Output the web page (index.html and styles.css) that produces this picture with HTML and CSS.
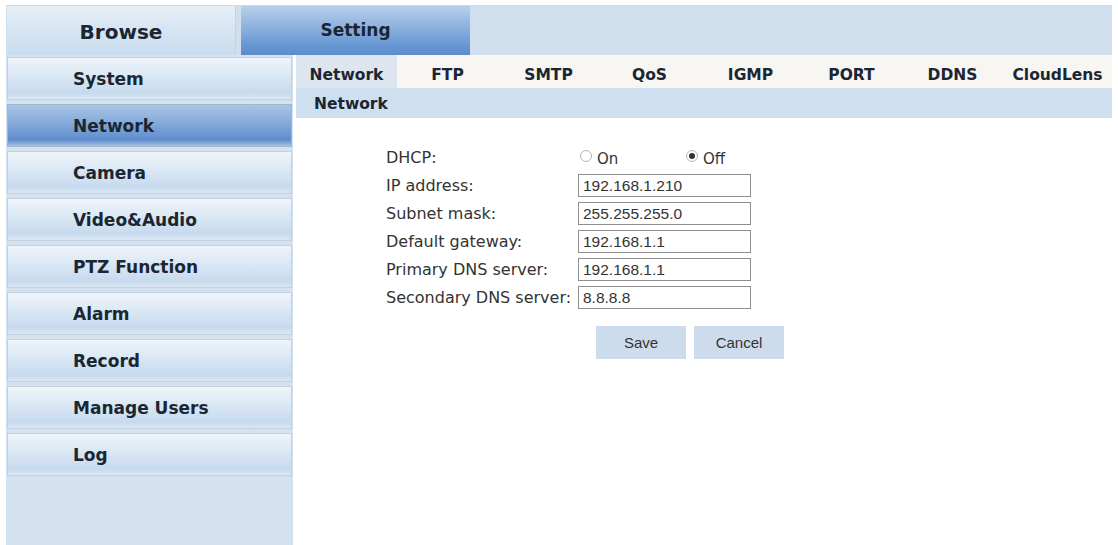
FILE: index.html
```html
<!DOCTYPE html>
<html lang="en">
<head>
  <meta charset="UTF-8" />
  <title>Network Settings</title>
  <link rel="stylesheet" href="styles.css">
</head>
<body>

  <div class="topbar">
    <div class="top-tab browse">Browse</div>
    <div class="top-tab setting">Setting</div>
  </div>

  <div class="layout">
    <div class="sidebar">
      <div class="side-item">System</div>
      <div class="side-item active">Network</div>
      <div class="side-item">Camera</div>
      <div class="side-item">Video&amp;Audio</div>
      <div class="side-item">PTZ Function</div>
      <div class="side-item">Alarm</div>
      <div class="side-item">Record</div>
      <div class="side-item">Manage Users</div>
      <div class="side-item">Log</div>
    </div>

    <div class="content">
      <div class="tabs">
        <div class="tab active">Network</div>
        <div class="tab">FTP</div>
        <div class="tab">SMTP</div>
        <div class="tab">QoS</div>
        <div class="tab">IGMP</div>
        <div class="tab">PORT</div>
        <div class="tab">DDNS</div>
        <div class="tab last">CloudLens</div>
      </div>
      <div class="subhead">Network</div>

      <div class="form">
        <div class="label">DHCP:</div>
        <div class="radios">
          <span class="radio-opt"><span class="radio"></span>On</span>
          <span class="radio-opt"><span class="radio checked"></span>Off</span>
        </div>

        <div class="label">IP address:</div>
        <input class="field" type="text" value="192.168.1.210" />

        <div class="label">Subnet mask:</div>
        <input class="field" type="text" value="255.255.255.0" />

        <div class="label">Default gateway:</div>
        <input class="field" type="text" value="192.168.1.1" />

        <div class="label">Primary DNS server:</div>
        <input class="field" type="text" value="192.168.1.1" />

        <div class="label">Secondary DNS server:</div>
        <input class="field" type="text" value="8.8.8.8" />
      </div>

      <div class="buttons">
        <button class="btn">Save</button>
        <button class="btn">Cancel</button>
      </div>
    </div>
  </div>

</body>
</html>
```

FILE: styles.css
```css
body {
  margin: 0;
  padding: 5px 6px 0 6px;
  font-family: "DejaVu Sans", Verdana, sans-serif;
  background: #fff;
  color: #1b2633;
}
.topbar {
  display: flex;
  gap: 5px;
  height: 49px;
  background: #cfdfee;
  border-top: 1px solid #d6d9dc;
}
.top-tab {
  width: 229px;
  display: flex;
  align-items: center;
  justify-content: center;
  font-weight: bold;
  padding-top: 3px;
  box-sizing: border-box;
}
.top-tab.browse {
  margin-left: 1px;
  font-size: 20px;
  background: linear-gradient(to bottom, #e6eff7 0%, #d6e5f2 50%, #c9ddef 100%);
  border-right: 1px solid #c2d2e0;
}
.top-tab.setting {
  font-size: 17px;
  padding-top: 0;
  padding-bottom: 2px;
  background: linear-gradient(to bottom, #b7cfea 0%, #8cb0de 45%, #6797d2 80%, #5c8ccc 100%);
}
.layout {
  display: flex;
  height: 490px;
}
.sidebar {
  width: 287px;
  background: #d4e2ef;
  padding-top: 2px;
  display: flex;
  flex-direction: column;
  gap: 4px;
}
.side-item {
  height: 43px;
  box-sizing: border-box;
  margin: 0 1px;
  padding-left: 65px;
  display: flex;
  align-items: center;
  font-weight: bold;
  font-size: 17px;
  border: 1px solid #c4d2df;
  background: linear-gradient(to bottom, #eef4fa 0%, #dce9f5 40%, #c6daee 85%, #dbe7f3 100%);
}
.side-item.active {
  background: linear-gradient(to bottom, #a8c4e6 0%, #84a9da 45%, #5f8ecd 85%, #a6c1e4 100%);
  border-color: #9fb6d0;
}
.content {
  flex: 1;
  margin-left: 3px;
  background: #fff;
}
.tabs {
  display: flex;
  height: 33px;
  background: #f7f6f3;
  font-weight: bold;
  font-size: 15.5px;
}
.tab {
  width: 101px;
  display: flex;
  align-items: center;
  justify-content: center;
  padding-top: 7px;
  box-sizing: border-box;
}
.tab.active {
  background: #dde6ef;
}
.tab.last {
  flex: 1;
}
.subhead {
  height: 30px;
  background: #cedff0;
  padding-left: 18px;
  font-weight: bold;
  font-size: 15.5px;
  line-height: 32px;
}
.form {
  display: grid;
  grid-template-columns: 192px 173px;
  grid-auto-rows: 23px;
  row-gap: 5px;
  margin: 28px 0 0 90px;
  font-size: 16px;
  color: #333;
}
.label {
  display: flex;
  align-items: center;
}
.radios {
  display: flex;
  align-items: center;
  font-size: 15px;
}
.radio-opt {
  display: flex;
  align-items: center;
  gap: 5px;
  width: 104px;
  flex-shrink: 0;
  padding-left: 2px;
  padding-top: 3px;
}
.radio {
  width: 10px;
  height: 10px;
  border: 1px solid #b5b5b5;
  border-radius: 50%;
  background: #fff;
  position: relative;
  top: -3px;
}
.radio.checked::after {
  content: "";
  position: absolute;
  left: 2px;
  top: 2px;
  width: 6px;
  height: 6px;
  border-radius: 50%;
  background: #333;
}
.field {
  height: 23px;
  box-sizing: border-box;
  border: 1px solid #8e8e8e;
  padding: 1px 4px 0;
  font-family: "Liberation Sans", Arial, sans-serif;
  font-size: 15.5px;
  color: #333;
}
.buttons {
  display: flex;
  gap: 8px;
  margin: 17px 0 0 300px;
}
.btn {
  width: 90px;
  height: 33px;
  border: none;
  background: #cddcec;
  font-family: "Liberation Sans", Arial, sans-serif;
  font-size: 15px;
  color: #333;
}
```
